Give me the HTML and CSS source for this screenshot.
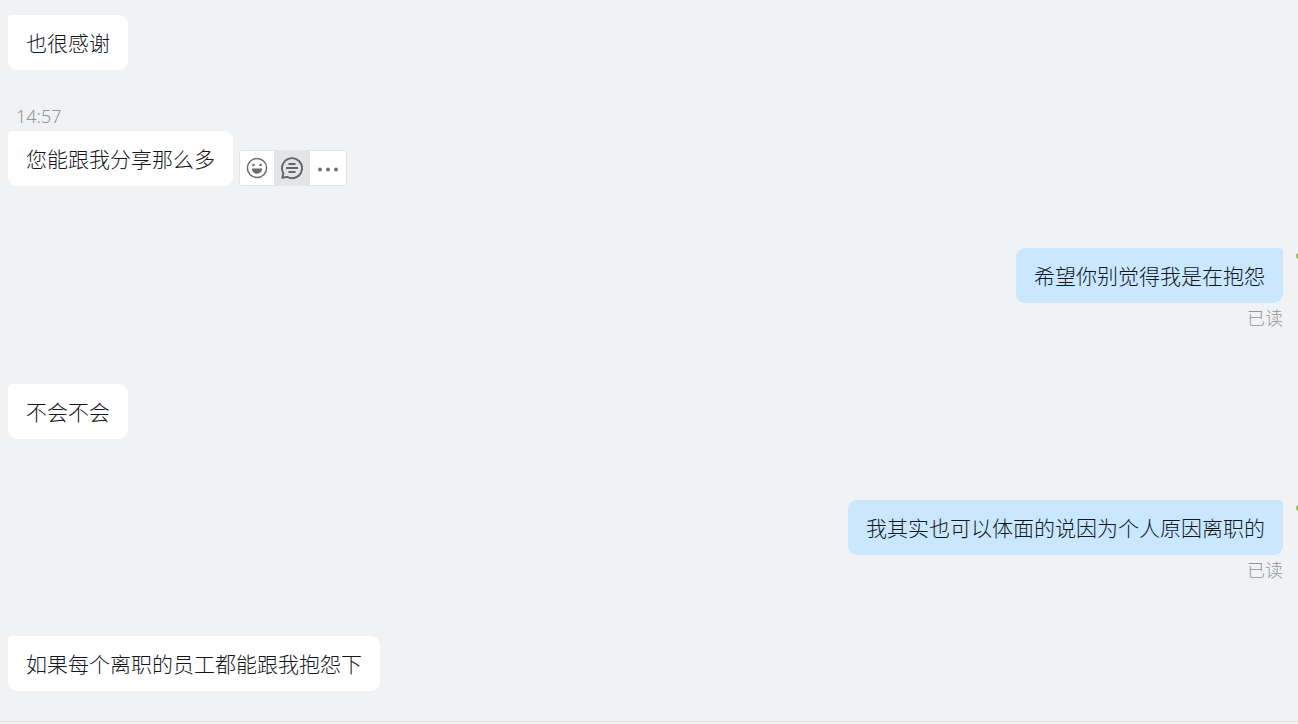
FILE: index.html
```html
<!DOCTYPE html>
<html lang="zh-CN">
<head>
  <meta charset="UTF-8">
  <meta name="viewport" content="width=device-width, initial-scale=1.0">
  <title>聊天</title>
  <link rel="stylesheet" href="styles.css">
</head>
<body>

  <main class="chat">
    <!-- Received -->
    <div class="message first">
      <p class="bubble">也很感谢</p>
    </div>

    <div class="message">
      <time class="time">14:57</time>
      <div class="row">
        <p class="bubble">您能跟我分享那么多</p>
        <div class="toolbar">
          <button type="button" class="tool" aria-label="表情">
            <svg width="22" height="22" viewBox="0 0 22 22" fill="none">
              <circle cx="11" cy="11" r="9.6" stroke="#6c6d6f" stroke-width="1.5"/>
              <circle cx="7.4" cy="8" r="1.3" fill="#6c6d6f"/>
              <circle cx="14.6" cy="8" r="1.3" fill="#6c6d6f"/>
              <path d="M5.8 11.6h10.4c0 3-2.2 5.2-5.2 5.2s-5.2-2.2-5.2-5.2z" fill="#6c6d6f"/>
            </svg>
          </button>
          <button type="button" class="tool active" aria-label="回复">
            <svg width="24" height="24" viewBox="0 0 24 24" fill="none" stroke="#646567" stroke-width="1.9">
              <path d="M2.2 21.8l1.2-4.6A10 10 0 1 1 7.2 20.9z" stroke-linejoin="round"/>
              <path d="M8.5 8h7M6 12h12M8.5 16h7"/>
            </svg>
          </button>
          <button type="button" class="tool" aria-label="更多">
            <svg width="22" height="22" viewBox="0 0 22 22" fill="#6c6d6f">
              <circle cx="3" cy="12.5" r="1.9"/>
              <circle cx="11" cy="12.5" r="1.9"/>
              <circle cx="19" cy="12.5" r="1.9"/>
            </svg>
          </button>
        </div>
      </div>
    </div>

    <!-- Sent -->
    <div class="message own">
      <p class="bubble">希望你别觉得我是在抱怨</p>
      <span class="status">已读</span>
      <span class="avatar"></span>
    </div>

    <div class="message">
      <p class="bubble">不会不会</p>
    </div>

    <div class="message own">
      <p class="bubble">我其实也可以体面的说因为个人原因离职的</p>
      <span class="status">已读</span>
      <span class="avatar"></span>
    </div>

    <div class="message">
      <p class="bubble">如果每个离职的员工都能跟我抱怨下</p>
    </div>
  </main>

  <footer class="composer"></footer>

</body>
</html>
```
FILE: styles.css
```css
* {
  box-sizing: border-box;
}
body {
  font-family: "Noto Sans CJK SC", sans-serif;
  font-weight: 300;
  background-color: #f0f2f4;
  color: #14171a;
  display: flex;
  flex-direction: column;
  min-height: 100vh;
  margin: 0;
  overflow: hidden;
}
.chat {
  flex: 1;
  display: flex;
  flex-direction: column;
  padding: 15px 15px 30px 8px;
}
.message {
  position: relative;
  display: flex;
  flex-direction: column;
  align-items: flex-start;
  padding-top: 61px;
}
.message.first {
  padding-top: 0;
}
.message.own {
  align-items: flex-end;
  margin-bottom: -4px;
}
.message:has(.time) {
  padding-top: 31px;
}
.time {
  padding-left: 8px;
  font-family: "Noto Sans", sans-serif;
  font-size: 18px;
  line-height: 30px;
  color: #949597;
}
.row {
  display: flex;
  align-items: flex-end;
  gap: 6px;
  margin-bottom: 1px;
}
.bubble {
  margin: 0;
  padding: 12px 18px;
  font-size: 21px;
  line-height: 31px;
  background-color: #fff;
  border-radius: 4px 9px 9px 9px;
}
.own .bubble {
  background-color: #c9e7ff;
  border-radius: 9px 4px 9px 9px;
}
.status {
  margin-top: 4px;
  font-size: 18px;
  line-height: 20px;
  color: #949597;
}
/* Avatar starts at the window edge */
.avatar {
  position: absolute;
  top: 66px;
  left: 100%;
  margin-left: 13px;
  width: 6px;
  height: 6px;
  border-radius: 3px;
  background-color: #8cc152;
}
.toolbar {
  display: flex;
  background-color: #fff;
  border: 1px solid #e3e4e6;
  border-radius: 3px;
}
.tool {
  display: flex;
  align-items: center;
  justify-content: center;
  width: 34px;
  height: 34px;
  padding: 0;
  border: none;
  background-color: transparent;
  cursor: pointer;
}
.tool:hover,
.tool.active {
  background-color: #e3e4e6;
}
.tool + .tool {
  width: 36px;
}
.composer {
  height: 3px;
  border-top: 1px solid #e0e1e3;
  background-color: #f3f3f4;
}
```
